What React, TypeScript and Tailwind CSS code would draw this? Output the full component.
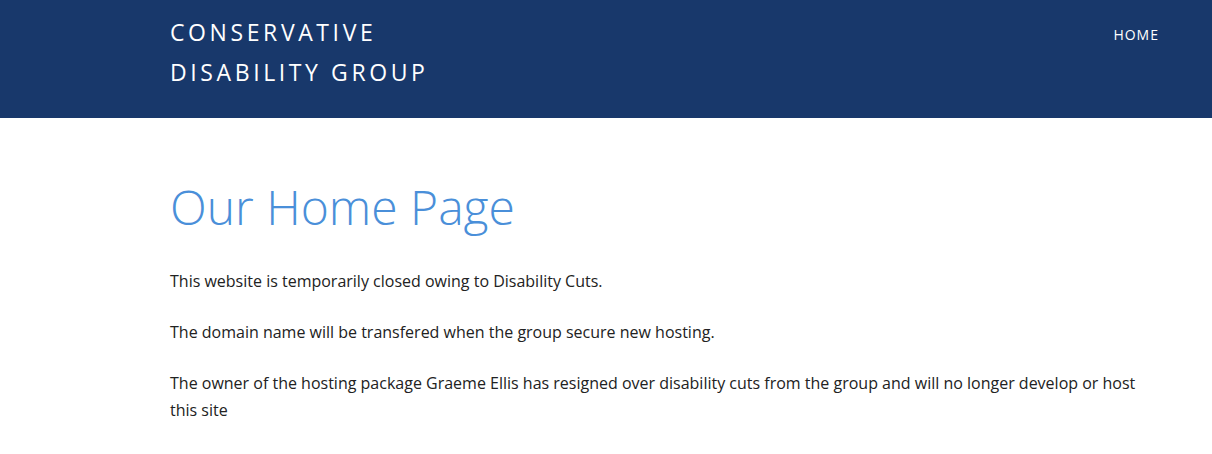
export default function App() {
  return (
    <div className="min-h-[454px] bg-white" style={{ fontFamily: '"Open Sans", sans-serif' }}>
      <header className="h-[118px] bg-[#18386b] text-white">
        <div className="flex justify-between pl-[170px] pr-[53px] pt-[12px]">
          <div className="text-[23px] leading-[40px] tracking-[3.6px] font-normal">
            <div>CONSERVATIVE</div>
            <div>DISABILITY GROUP</div>
          </div>
          <nav className="pt-[12px] text-[14px] tracking-[1px]">HOME</nav>
        </div>
      </header>
      <main className="pl-[170px] pr-[52px] pt-[59px] text-[#222]">
        <h1 className="text-[48px] leading-[60px] font-light text-[#4a8fd9] mb-[31px]">Our Home Page</h1>
        <p className="text-[16px] leading-[27px] mb-[24px]">This website is temporarily closed owing to Disability Cuts.</p>
        <p className="text-[16px] leading-[27px] mb-[24px]">The domain name will be transfered when the group secure new hosting.</p>
        <p className="text-[16px] leading-[27px]">The owner of the hosting package Graeme Ellis has resigned over disability cuts from the group and will no longer develop or host this site</p>
      </main>
    </div>
  );
}
